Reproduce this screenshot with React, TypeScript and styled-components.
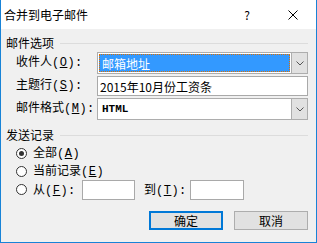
import React from "react";
import styled, { createGlobalStyle } from "styled-components";

const GlobalStyle = createGlobalStyle`
  html, body {
    margin: 0;
    padding: 0;
    background: #ffffff;
  }
  * {
    box-sizing: border-box;
  }
`;

const UI_FONT = `"Noto Sans CJK SC", "Noto Sans", sans-serif`;
const MONO_FONT = `"Liberation Mono", "DejaVu Sans Mono", monospace`;

const Window = styled.div`
  width: 317px;
  height: 243px;
  display: flex;
  flex-direction: column;
  border: 1px solid #1883d7;
  border-top: none;
  background: #f0f0f0;
  font-family: ${UI_FONT};
  font-size: 12px;
  color: #000;
  overflow: hidden;
`;

const TitleBar = styled.div`
  height: 29px;
  display: flex;
  align-items: center;
  background: #ffffff;
  padding-left: 3px;
`;

const Title = styled.div`
  flex: 1;
  font-size: 12px;
  line-height: 16px;
`;

const CaptionButton = styled.div`
  width: 46px;
  height: 29px;
  display: flex;
  align-items: center;
  justify-content: center;
  font-size: 12px;
  color: #000;
`;

const Body = styled.div`
  flex: 1;
  display: flex;
  flex-direction: column;
  padding: 0 8px 0 5px;
`;

const GroupHeader = styled.div<{ $top: number }>`
  display: flex;
  align-items: center;
  height: 16px;
  line-height: 16px;
  margin-top: ${({ $top }) => $top}px;
`;

const GroupLine = styled.div`
  flex: 1;
  height: 1px;
  background: #dcdcdc;
  margin-left: 6px;
`;

const FieldGrid = styled.div`
  display: grid;
  grid-template-columns: 91px 1fr;
  row-gap: 2px;
  align-items: center;
  margin-top: 1px;
`;

const FieldLabel = styled.div`
  height: 16px;
  margin-bottom: 4px;
  padding-left: 10px;
  line-height: 16px;
  white-space: nowrap;
  overflow: visible;
`;

const Combo = styled.div`
  height: 22px;
  display: flex;
  border: 1px solid #adadad;
  background: #ffffff;
`;

const ComboValue = styled.div<{ $selected?: boolean; $mono?: boolean }>`
  flex: 1;
  margin: 1px;
  display: flex;
  align-items: center;
  padding-left: 2px;
  background: ${({ $selected }) => ($selected ? "#3399ff" : "transparent")};
  color: ${({ $selected }) => ($selected ? "#ffffff" : "#000000")};
  border: 1px dotted ${({ $selected }) => ($selected ? "#e07000" : "transparent")};
  font-family: ${({ $mono }) => ($mono ? MONO_FONT : UI_FONT)};
  font-size: ${({ $mono }) => ($mono ? "11px" : "12px")};
  font-weight: ${({ $mono }) => ($mono ? 700 : 400)};
`;

const ComboButton = styled.div`
  width: 16px;
  display: flex;
  align-items: center;
  justify-content: center;
  background: #e1e1e1;
  border-left: 1px solid #adadad;
`;

const TextBox = styled.div<{ $width?: number }>`
  height: 20px;
  width: ${({ $width }) => ($width ? `${$width}px` : "auto")};
  display: flex;
  align-items: center;
  padding-left: 2px;
  border: 1px solid #a9a9a9;
  background: #ffffff;
  white-space: nowrap;
`;

const RadioList = styled.div`
  display: flex;
  flex-direction: column;
  margin-top: 1px;
  padding-left: 10px;
`;

const RadioRow = styled.div<{ $height: number }>`
  height: ${({ $height }) => $height}px;
  display: flex;
  align-items: center;
`;

const RadioCircle = styled.div<{ $checked?: boolean }>`
  width: 11px;
  height: 11px;
  border-radius: 50%;
  border: 1px solid #333333;
  background: #ffffff;
  display: flex;
  align-items: center;
  justify-content: center;
  margin-right: 6px;

  &::after {
    content: "";
    width: 5px;
    height: 5px;
    border-radius: 50%;
    background: ${({ $checked }) => ($checked ? "#333333" : "transparent")};
  }
`;

const RadioText = styled.span<{ $width?: number }>`
  line-height: 16px;
  white-space: nowrap;
  width: ${({ $width }) => ($width ? `${$width}px` : "auto")};
`;

const RangeLabel = styled.span`
  margin-left: 9px;
  width: 46px;
  line-height: 16px;
  white-space: nowrap;
`;

const KeyPart = styled.span`
  font-family: ${MONO_FONT};
  font-size: 12px;
  line-height: 16px;
  letter-spacing: 0.5px;

  u {
    text-underline-offset: 1px;
  }
`;

const ButtonRow = styled.div`
  display: flex;
  justify-content: flex-end;
  gap: 11px;
  margin-top: 12px;
`;

const DialogButton = styled.div<{ $default?: boolean }>`
  width: 74px;
  height: 19px;
  display: flex;
  align-items: center;
  justify-content: center;
  background: #e1e1e1;
  border: ${({ $default }) => ($default ? "2px solid #0078d7" : "1px solid #adadad")};
  font-size: 12px;
`;

const Chevron = () => (
  <svg width="8" height="5" viewBox="0 0 8 5">
    <path d="M0.5 0.5 L4 4 L7.5 0.5" fill="none" stroke="#555" strokeWidth="1" />
  </svg>
);

const CloseGlyph = () => (
  <svg width="10" height="10" viewBox="0 0 10 10">
    <path d="M0.5 0.5 L9.5 9.5 M9.5 0.5 L0.5 9.5" stroke="#000" strokeWidth="1" />
  </svg>
);

const Key = ({ k }: { k: string }) => (
  <KeyPart>
    (<u>{k}</u>):
  </KeyPart>
);

const App: React.FC = () => {
  return (
    <>
      <GlobalStyle />
      <Window>
        <TitleBar>
          <Title>合并到电子邮件</Title>
          <CaptionButton>?</CaptionButton>
          <CaptionButton>
            <CloseGlyph />
          </CaptionButton>
        </TitleBar>

        <Body>
          <GroupHeader $top={6}>
            邮件选项
            <GroupLine />
          </GroupHeader>

          <FieldGrid>
            <FieldLabel>
              收件人<Key k="O" />
            </FieldLabel>
            <Combo>
              <ComboValue $selected>邮箱地址</ComboValue>
              <ComboButton>
                <Chevron />
              </ComboButton>
            </Combo>

            <FieldLabel>
              主题行<Key k="S" />
            </FieldLabel>
            <TextBox>2015年10月份工资条</TextBox>

            <FieldLabel>
              邮件格式<Key k="M" />
            </FieldLabel>
            <Combo>
              <ComboValue $mono>HTML</ComboValue>
              <ComboButton>
                <Chevron />
              </ComboButton>
            </Combo>
          </FieldGrid>

          <GroupHeader $top={7}>
            发送记录
            <GroupLine />
          </GroupHeader>

          <RadioList>
            <RadioRow $height={18}>
              <RadioCircle $checked />
              <RadioText>
                全部
                <KeyPart>
                  (<u>A</u>)
                </KeyPart>
              </RadioText>
            </RadioRow>
            <RadioRow $height={18}>
              <RadioCircle />
              <RadioText>
                当前记录
                <KeyPart>
                  (<u>E</u>)
                </KeyPart>
              </RadioText>
            </RadioRow>
            <RadioRow $height={19}>
              <RadioCircle />
              <RadioText $width={49}>
                从<Key k="F" />
              </RadioText>
              <TextBox $width={53} />
              <RangeLabel>
                到<Key k="T" />
              </RangeLabel>
              <TextBox $width={54} />
            </RadioRow>
          </RadioList>

          <ButtonRow>
            <DialogButton $default>确定</DialogButton>
            <DialogButton>取消</DialogButton>
          </ButtonRow>
        </Body>
      </Window>
    </>
  );
};

export default App;
